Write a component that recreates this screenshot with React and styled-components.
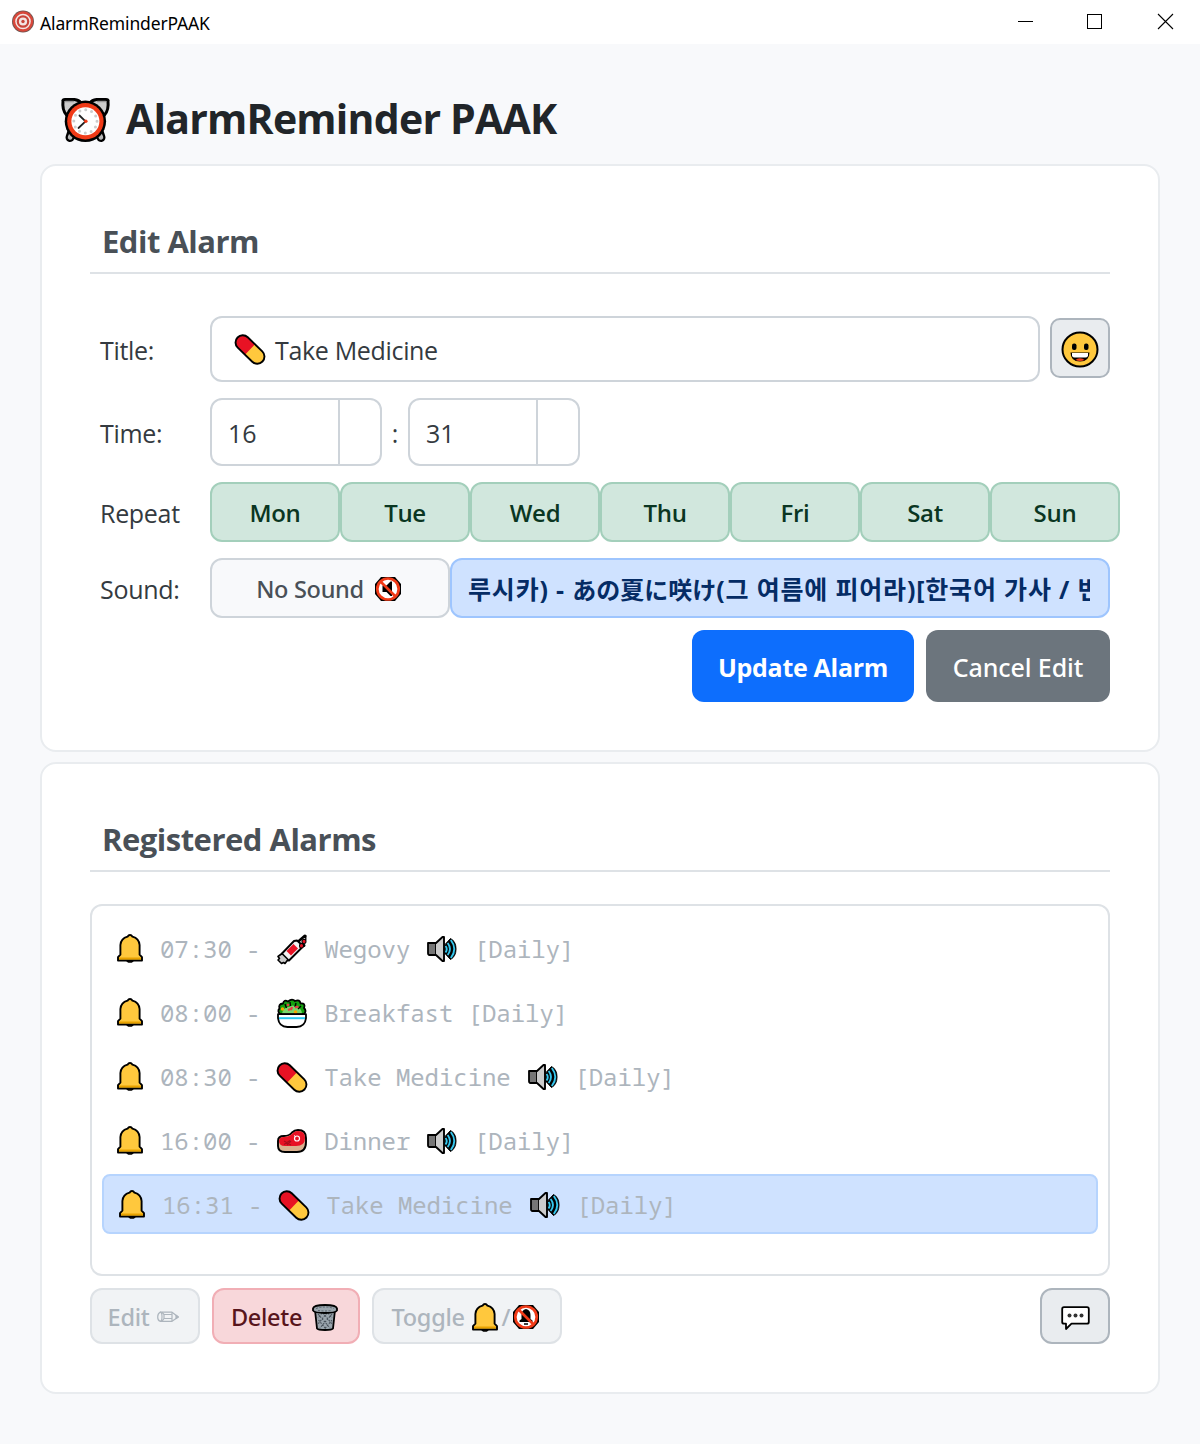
import React from 'react';
import styled, { createGlobalStyle } from 'styled-components';

const sans = '"Open Sans", "Noto Sans", "Noto Sans CJK KR", sans-serif';
const medium = '"Noto Sans", "Open Sans", "Noto Sans CJK KR", sans-serif';
const mono = '"Noto Sans Mono", "DejaVu Sans Mono", monospace';

const GlobalStyle = createGlobalStyle`
  * { box-sizing: border-box; }
  body { margin: 0; background: #f8f9fb; font-family: ${sans}; color: #343a40; }
  button, input { font: inherit; color: inherit; margin: 0; }
  svg { display: block; flex: none; overflow: visible; }
`;

const Window = styled.div`
  width: 1200px;
  height: 1444px;
  background: #f8f9fb;
  overflow: hidden;
`;

const TitleBar = styled.header`
  display: flex;
  align-items: center;
  height: 44px;
  padding: 0 27px 0 12px;
  background: #fff;
  color: #000;
`;

const AppName = styled.span`
  flex: 1;
  padding: 1px 0 0 6px;
  font: 400 17.5px/24px ${medium};
  letter-spacing: -0.15px;
`;

const WindowControls = styled.div`
  display: grid;
  grid-template-columns: 69px 71px 15px;
  align-items: center;
  padding-bottom: 1px;
`;

const Content = styled.main`
  display: flex;
  flex-direction: column;
  gap: 10px;
  padding: 0 40px;
`;

const PageTitle = styled.h1`
  display: flex;
  align-items: center;
  gap: 16px;
  height: 110px;
  margin: 0;
  padding: 42px 0 0 21px;
  color: #212529;
  font-size: 41px;
  font-weight: 700;
  line-height: 56px;
  letter-spacing: -0.77px;
`;

const TitleText = styled.span`
  padding-bottom: 5px;
`;

const Card = styled.section`
  height: ${(p) => p.$height}px;
  padding: 48px;
  background: #fff;
  border: 2px solid #e9ecef;
  border-radius: 16px;
`;

const CardTitle = styled.h2`
  height: 60px;
  margin: 0;
  padding-left: 12px;
  border-bottom: 2px solid #dee2e6;
  color: #495057;
  font-size: 31px;
  font-weight: 700;
  line-height: 54px;
  letter-spacing: -0.5px;
`;

const Form = styled.div`
  display: flex;
  flex-direction: column;
  gap: 16px;
  margin-top: 42px;
`;

const Field = styled.div`
  display: grid;
  grid-template-columns: 120px ${(p) => p.$span || 900}px;
  align-items: center;
`;

const Label = styled.label`
  padding: 1px 0 0 10px;
  font-size: 25px;
  line-height: 34px;
  letter-spacing: -0.3px;
`;

const Controls = styled.div`
  display: flex;
  align-items: center;
  gap: ${(p) => p.$gap || 0}px;
`;

const TextField = styled.div`
  display: flex;
  align-items: center;
  gap: 10px;
  flex: 1;
  height: 66px;
  padding: 1px 22px 0 23px;
  border: 2px solid #ced4da;
  border-radius: 12px;
  font-size: 25px;
  letter-spacing: -0.33px;
`;

const SpinBox = styled.div`
  display: grid;
  grid-template-columns: 1fr 42px;
  width: 172px;
  height: 68px;
  border: 2px solid #ced4da;
  border-radius: 12px;
  font-size: 25px;
  line-height: 62px;
`;

const SpinValue = styled.span`
  padding: 2px 0 0 16px;
`;

const SpinSteps = styled.span`
  border-left: 2px solid #ced4da;
`;

const Colon = styled.span`
  width: 26px;
  padding-top: 2px;
  text-align: center;
  font-size: 25px;
  line-height: 34px;
`;

const Button = styled.button`
  display: flex;
  align-items: center;
  justify-content: center;
  flex: none;
  padding: 0;
  border: 2px solid #adb5bd;
  border-radius: 12px;
  background: #e9ecef;
  font-family: ${medium};
  font-size: 23.5px;
  font-weight: 500;
  letter-spacing: -0.3px;
  white-space: pre;
`;

const EmojiButton = styled(Button)`
  width: 60px;
  height: 60px;
  margin-bottom: 2px;
  border-radius: 10px;
  padding-top: 3px;
`;

const DayButton = styled(Button)`
  width: 130px;
  height: 60px;
  border-color: #a3cfbb;
  background: #d1e7dd;
  color: #0a3622;
  font-family: ${sans};
  font-size: 24px;
  font-weight: 600;
  padding-top: 1px;
`;

const SoundButton = styled(Button)`
  width: 240px;
  height: 60px;
  gap: 11px;
  padding: 2px 3px 0 0;
  border-color: #ced4da;
  background: #f8f9fb;
  color: #495057;
`;

const TrackButton = styled(Button)`
  width: 660px;
  height: 60px;
  padding: 2px 18px 0 16px;
  justify-content: flex-start;
  border-color: #9ec5fe;
  background: #cfe2ff;
  color: #052c65;
`;

const TrackName = styled.span`
  display: block;
  width: 100%;
  overflow: hidden;
  font: 700 25px/40px "Open Sans", "Noto Sans CJK KR", sans-serif;
  letter-spacing: 0.82px;
  text-align: left;
`;

const Kana = styled.span`
  font-family: "Noto Sans CJK JP", sans-serif;
  font-size: 24px;
  letter-spacing: 0;
`;

const FormActions = styled.div`
  display: flex;
  justify-content: flex-end;
  gap: 12px;
  margin-top: -4px;
`;

const ActionButton = styled(Button)`
  width: ${(p) => (p.$primary ? 222 : 184)}px;
  height: 72px;
  padding-top: 2px;
  border: 0;
  background: ${(p) => (p.$primary ? '#0d6efd' : '#6c757d')};
  color: #fff;
  font-family: ${(p) => (p.$primary ? sans : medium)};
  font-size: 25px;
  font-weight: ${(p) => (p.$primary ? 700 : 500)};
  letter-spacing: ${(p) => (p.$primary ? -0.3 : -0.1)}px;
`;

const AlarmList = styled.ul`
  display: flex;
  flex-direction: column;
  gap: 4px;
  height: 372px;
  margin: 32px 0 12px;
  padding: 12px 10px;
  border: 2px solid #dee2e6;
  border-radius: 12px;
  list-style: none;
`;

const AlarmRow = styled.li`
  display: flex;
  align-items: center;
  height: 60px;
  padding-left: 12px;
  border: ${(p) => (p.$selected ? '2px solid #b6d4fe' : '0')};
  border-radius: 8px;
  background: ${(p) => (p.$selected ? '#cfe2ff' : 'transparent')};
  color: #adb5bd;
  font: 400 24px/32px ${mono};
  letter-spacing: -0.05px;
  white-space: pre;
`;

const RowText = styled.span`
  padding-top: 2px;
`;

const IconSlot = styled.span`
  display: flex;
  justify-content: center;
  width: 35px;
  padding-top: 2px;
`;

const BellSlot = styled(IconSlot)`
  width: 32px;
  margin-right: 14px;
  padding-top: 1px;
`;

const Toolbar = styled.div`
  display: flex;
  gap: 12px;
`;

const ToolButton = styled(Button)`
  width: ${(p) => p.$width}px;
  height: 56px;
  padding: 2px 3px 0 0;
  gap: ${(p) => p.$gap || 0}px;
  border-color: ${(p) => (p.$danger ? '#f1aeb5' : '#dee2e6')};
  background: ${(p) => (p.$danger ? '#f8d7da' : '#f1f3f5')};
  color: ${(p) => (p.$danger ? '#58151c' : '#adb5bd')};
`;

const CommentButton = styled(Button)`
  width: 70px;
  height: 56px;
  margin-left: auto;
  padding-top: 5px;
`;

const ToggleText = styled.span`
  margin-right: 2px;
`;

const Slash = styled.span`
  width: 15px;
  text-align: center;
`;

const Target = () => (
  <svg width="22" height="22" viewBox="0 0 22 22" fill="none">
    <circle cx="11" cy="10.500" r="11" fill="#6f5652" />
    <circle cx="11" cy="10.500" r="10.200" fill="#d9473a" />
    <circle cx="11" cy="10.500" r="7.800" fill="#f3e6e4" />
    <circle cx="11" cy="10.500" r="5.200" stroke="#c8453a" strokeWidth="2.200" />
    <circle cx="11" cy="10.500" r="1.700" fill="#c8453a" />
  </svg>
);

const Minimize = () => (
  <svg width="15" height="15" shapeRendering="crispEdges"><path d="M0 7h15v1H0z" /></svg>
);
const Maximize = () => (
  <svg width="15" height="15" shapeRendering="crispEdges"><path d="M.5.5h14v14H.5z" fill="none" stroke="#000" /></svg>
);
const Close = () => (
  <svg width="15" height="15"><path d="M0 0l15 15M15 0L0 15" fill="none" stroke="#000" strokeWidth="1.100" /></svg>
);

const AlarmClock = () => (
  <svg width="49" height="45" viewBox="0 0 49 45" strokeLinejoin="round" strokeLinecap="round">
    <path d="M10.500 35L9 39.500M38.500 35l1.500 4.500" stroke="#000" strokeWidth="9" />
    <path d="M10.500 36L9 39.500M38.500 36l1.500 3.500" stroke="#b8b8b8" strokeWidth="4.500" />
    <path d="M2 3Q1.500 1.500 4 1.500h9.500Q18 2 20 5L5.500 17Q1 12 2 3zM47 3Q47.500 1.500 45 1.500h-9.500Q31 2 29 5l14.500 12Q48 12 47 3z" fill="#ccc" stroke="#000" strokeWidth="3" />
    <path d="M4.500 3.500h8M36.500 3.500h8" stroke="#999" strokeWidth="1.500" />
    <circle cx="24.400" cy="23.300" r="20.700" fill="#000" />
    <circle cx="24.400" cy="23.300" r="18.200" fill="#f03a17" />
    <circle cx="24.400" cy="23.300" r="14" fill="#fff" />
    <circle cx="24.400" cy="23.300" r="11.600" fill="none" stroke="#ccc" strokeWidth="3" strokeDasharray="0 6.074" />
    <path d="M18.500 17.500l6 5.800-7 6.700" fill="none" stroke="#222" strokeWidth="1.800" />
    <circle cx="24.800" cy="23.300" r="1.800" fill="#f03a17" />
  </svg>
);

const Smile = () => (
  <svg width="38" height="37" viewBox="0 0 38 37">
    <ellipse cx="19" cy="18.500" rx="17.500" ry="17" fill="#ffc83d" stroke="#000" strokeWidth="2" />
    <rect x="11" y="12.500" width="4.500" height="6.500" rx="2" />
    <rect x="23" y="12.500" width="4.500" height="6.500" rx="2" />
    <path d="M9.500 21.500h19q0 9-9.500 9t-9.500-9z" />
    <path d="M11 22h16v3q-1 1.500-2.500 1.500h-11q-1.500 0-2.500-1.500z" fill="#fff" />
    <path d="M14.500 29q1.500-1.700 4.500-1.700t4.500 1.700q-4.500 2-9 0z" fill="#f03a17" />
  </svg>
);

const Pill = () => (
  <svg width="30" height="29" viewBox="0 0 30 29">
    <g transform="rotate(44 15 14.500)">
      <rect x="-2.300" y="7.300" width="34.600" height="14.400" rx="7.200" fill="#ffc83d" />
      <path d="M15 7.300H4.900a7.200 7.200 0 0 0 0 14.400H15z" fill="#e81224" />
      <rect x="-2.300" y="7.300" width="34.600" height="14.400" rx="7.200" fill="none" stroke="#000" strokeWidth="1.900" />
    </g>
  </svg>
);

const Bell = () => (
  <svg width="26" height="29" viewBox="0 0 26 29" strokeLinejoin="round">
    <path d="M9.500 25.500h7Q16 28 13 28t-3.500-2.500z" fill="#8e562e" stroke="#000" strokeWidth="1.600" />
    <path d="M1 26.500v-3.300l2.400-2.500V11Q4 4.500 10.500 2.700 11.500 1 13 1t2.500 1.700Q22 4.500 22.600 11v9.700l2.400 2.500v3.300z" fill="#ffc83d" stroke="#000" strokeWidth="1.900" />
    <path d="M2 23.500h22v2H2z" fill="#e8a200" />
  </svg>
);

const Syringe = () => (
  <svg width="30" height="29" viewBox="0 0 30 29" strokeLinejoin="round" strokeLinecap="round">
    <path d="M20 8l8-7M23 7l4 3.500" stroke="#000" strokeWidth="3" />
    <path d="M21 7.500L28.800.8v4L24 9.500z" fill="#ddd" stroke="#000" strokeWidth="1.300" />
    <path d="M5 18.500L17 6l3-.5 5 4.500-.5 3L12 25.500l-3-.5-3.500-3.500z" fill="#f2f2f2" stroke="#000" strokeWidth="1.900" />
    <path d="M9.500 16l7-7 4.500 4.500-7 7z" fill="#e81224" />
    <path d="M1 21.500L5 18.500l6 6-3 4-1.500-1-2 1L1 25l1.500-1.500z" fill="#ccc" stroke="#000" strokeWidth="1.600" />
    <path d="M27 6.200v.3M24.500 10.500v.4" stroke="#000" strokeWidth="5" />
    <path d="M27 6.200v.3M24.500 10.500v.4" stroke="#e81224" strokeWidth="3" />
  </svg>
);

const Salad = () => (
  <svg width="30" height="29" viewBox="0 0 30 29" strokeLinejoin="round">
    <path d="M3 15Q0 12 2.500 9.500 1 5 6 4.500 7 0 11 2.500 15-1 18 2q5-2 5.500 2.500Q29 4 27 9q3 3 0 6z" fill="#13a10e" stroke="#000" strokeWidth="1.800" />
    <path d="M5 14.500Q7 7.500 12 8q4-3 7 0 5 0 6 6.500z" fill="#7ad66b" />
    <path d="M8 5l1.500 4M13 3l.5 4M19 4l-1 4M24 7l-3 3" stroke="#000" strokeWidth="1.400" />
    <path d="M10 5.500l2 1M11 11l4-1.500M18 8.500l3.500-1M15 8l-1 3" stroke="#e83b45" strokeWidth="2.200" />
    <circle cx="5.500" cy="10" r="1.800" fill="#f7a500" /><circle cx="18.500" cy="13" r="1.800" fill="#f7a500" />
    <path d="M1 15.200h28v4Q28 28 19.500 28h-9Q2 28 1 19.200z" fill="#fff" stroke="#000" strokeWidth="1.800" />
    <path d="M2 18.200h26v2H2z" fill="#28c8f0" />
  </svg>
);

const Meat = () => (
  <svg width="30" height="24" viewBox="0 0 30 24" strokeLinejoin="round">
    <path d="M1 12Q1 7 7 7q5 0 8-3.500Q17.500 1 21 1q8 0 8 8v4q0 10-9 10H8q-7 0-7-6z" fill="#dab18f" stroke="#000" strokeWidth="1.900" />
    <path d="M2 12Q2 8 7 8q5.500 0 9-4 2-2 5-2 7 0 7 7 0 8-9 8H8q-6 0-6-5z" fill="#e81224" />
    <path d="M7 12l7 4M7 15.500l6-4M10 16l4-4" stroke="#a80e1b" strokeWidth="1.200" />
    <circle cx="20" cy="9.500" r="2.500" fill="none" stroke="#fff" strokeWidth="1.200" /><path d="M17 6.500l2 1.500" stroke="#fff" />
  </svg>
);

const Speaker = () => (
  <svg width="30" height="26" viewBox="0 0 30 26" strokeLinejoin="round">
    <path d="M18 8.500l5.500-6Q29 5.500 29 13t-5.500 10.500l-5.500-6z" fill="#000" stroke="#000" />
    <path d="M18.500 10q2.500 3 0 6.500M20.700 7q4.500 6 0 12M23.800 4q7 9 0 18" fill="none" stroke="#35c7ee" strokeWidth="1.900" />
    <path d="M1 7h8v12H2.500Q1 19 1 17z" fill="#767676" stroke="#000" strokeWidth="1.800" />
    <path d="M9 7l7-6h1v24h-1l-7-6z" fill="#ccc" />
    <path d="M8 7h1l6.500-6H17v24h-1.500L9 19H8" fill="none" stroke="#000" strokeWidth="1.900" />
  </svg>
);

const Prohibited = ({ children }) => (
  <svg width="26" height="24" viewBox="0 0 26 24">
    <path d="M6 0h14l6 7v10l-6 7H6l-6-7V7z" fill="#000" />
    <ellipse cx="13" cy="12" rx="10.700" ry="10.500" fill="#fff" stroke="#f03a17" strokeWidth="2.700" />
    {children}
    <path d="M5.500 4.500l15 15" stroke="#f03a17" strokeWidth="2.600" />
  </svg>
);

const Muted = () => (
  <Prohibited><path d="M7.500 8.500h4l4-4H17V19h-1.500l-4-4h-4z" /></Prohibited>
);
const NoBell = () => (
  <Prohibited><path d="M6.500 17v-1.500L8.500 14v-4q0-5 4.500-6 4.500 1 4.500 6v4l2 1.500V17zM11 18.300h4v1.500h-4z" /></Prohibited>
);

const Trash = () => (
  <svg width="26" height="27" viewBox="0 0 26 27" strokeLinejoin="round">
    <path d="M3 6h20l-2 18.500Q20 26 13 26t-8-1.500z" fill="#9aa5ad" stroke="#000" strokeWidth="1.800" />
    <path d="M6 10l12 14M11 9l9 11M16 9l4 5M6.500 16l7 8.500M20 10L8 24M15 9l-9 11M10 9l-4 5M20 16l-7 8.500" stroke="#48515a" strokeWidth="1.100" strokeDasharray="1.800 1.200" />
    <path d="M1 4.500Q1.500 1 13 1t12 3.500v2Q24 9 13 9T1 6.500z" fill="#9aa5ad" stroke="#000" strokeWidth="1.800" />
    <path d="M4 4.500q9-3 18 0M6 6.500q7 1 14 0" fill="none" stroke="#59636b" strokeDasharray="2 1.500" />
  </svg>
);

const Pencil = () => (
  <svg width="22" height="12" viewBox="0 0 22 12" fill="none" stroke="#adb5bd" strokeWidth="1.200" strokeLinejoin="round">
    <path d="M3 1.200h12L21.300 6 15 10.300H3Q.7 9.500.7 6T3 1.200z" />
    <path d="M3 1.200q2 0 2 4.500t-2 4.600M6.500 3.500H15M6.500 7.500H15M5 1.200l2 2.300v4l-2 2.800M15 1.200v9" />
    <path d="M19 4.300L21.300 6 19 7.500z" fill="#adb5bd" />
  </svg>
);

const Comment = () => (
  <svg width="29" height="25" viewBox="0 0 29 25" strokeLinejoin="round">
    <path d="M3 1.200h23q1.800 0 1.800 1.800v13q0 1.700-1.800 1.700H10.500L5 23v-5.300H3q-1.800 0-1.800-1.700V3q0-1.800 1.800-1.800z" fill="#fff" stroke="#000" strokeWidth="1.800" />
    <circle cx="8.500" cy="9.500" r="2" fill="#333" /><circle cx="14.500" cy="9.500" r="2" fill="#333" /><circle cx="20.500" cy="9.500" r="2" fill="#333" />
  </svg>
);

const days = ['Mon', 'Tue', 'Wed', 'Thu', 'Fri', 'Sat', 'Sun'];

const alarms = [
  { time: '07:30', Icon: Syringe, name: 'Wegovy', sound: true },
  { time: '08:00', Icon: Salad, name: 'Breakfast', sound: false },
  { time: '08:30', Icon: Pill, name: 'Take Medicine', sound: true },
  { time: '16:00', Icon: Meat, name: 'Dinner', sound: true },
  { time: '16:31', Icon: Pill, name: 'Take Medicine', sound: true, selected: true },
];

const TimeSpin = ({ value }) => (
  <SpinBox>
    <SpinValue>{value}</SpinValue>
    <SpinSteps />
  </SpinBox>
);

const Alarm = ({ time, Icon, name, sound, selected }) => (
  <AlarmRow $selected={selected}>
    <BellSlot><Bell /></BellSlot>
    <RowText>{`${time} - `}</RowText>
    <IconSlot><Icon /></IconSlot>
    <RowText>{` ${name} `}</RowText>
    {sound && <IconSlot><Speaker /></IconSlot>}
    <RowText>{sound ? ' [Daily]' : '[Daily]'}</RowText>
  </AlarmRow>
);

export default function App() {
  return (
    <Window>
      <GlobalStyle />
      <TitleBar>
        <Target />
        <AppName>AlarmReminderPAAK</AppName>
        <WindowControls>
          <Minimize />
          <Maximize />
          <Close />
        </WindowControls>
      </TitleBar>
      <Content>
        <PageTitle>
          <AlarmClock />
          <TitleText>AlarmReminder PAAK</TitleText>
        </PageTitle>
        <Card $height={588}>
          <CardTitle>Edit Alarm</CardTitle>
          <Form>
            <Field>
              <Label>Title:</Label>
              <Controls $gap={10}>
                <TextField><Pill />Take Medicine</TextField>
                <EmojiButton><Smile /></EmojiButton>
              </Controls>
            </Field>
            <Field>
              <Label>Time:</Label>
              <Controls>
                <TimeSpin value="16" />
                <Colon>:</Colon>
                <TimeSpin value="31" />
              </Controls>
            </Field>
            <Field $span={910}>
              <Label>Repeat</Label>
              <Controls>
                {days.map((day) => <DayButton key={day}>{day}</DayButton>)}
              </Controls>
            </Field>
            <Field>
              <Label>Sound:</Label>
              <Controls>
                <SoundButton>No Sound<Muted /></SoundButton>
                <TrackButton>
                  <TrackName>루시카) - <Kana>あの夏に咲け</Kana>(그 여름에 피어라)[한국어 가사 / 번</TrackName>
                </TrackButton>
              </Controls>
            </Field>
            <FormActions>
              <ActionButton $primary>Update Alarm</ActionButton>
              <ActionButton>Cancel Edit</ActionButton>
            </FormActions>
          </Form>
        </Card>
        <Card $height={632}>
          <CardTitle>Registered Alarms</CardTitle>
          <AlarmList>
            {alarms.map((alarm) => <Alarm key={alarm.time} {...alarm} />)}
          </AlarmList>
          <Toolbar>
            <ToolButton $width={110} $gap={8}>Edit<Pencil /></ToolButton>
            <ToolButton $width={148} $gap={10} $danger>Delete<Trash /></ToolButton>
            <ToolButton $width={190}>
              <ToggleText>{'Toggle '}</ToggleText>
              <Bell />
              <Slash>/</Slash>
              <NoBell />
            </ToolButton>
            <CommentButton><Comment /></CommentButton>
          </Toolbar>
        </Card>
      </Content>
    </Window>
  );
}
